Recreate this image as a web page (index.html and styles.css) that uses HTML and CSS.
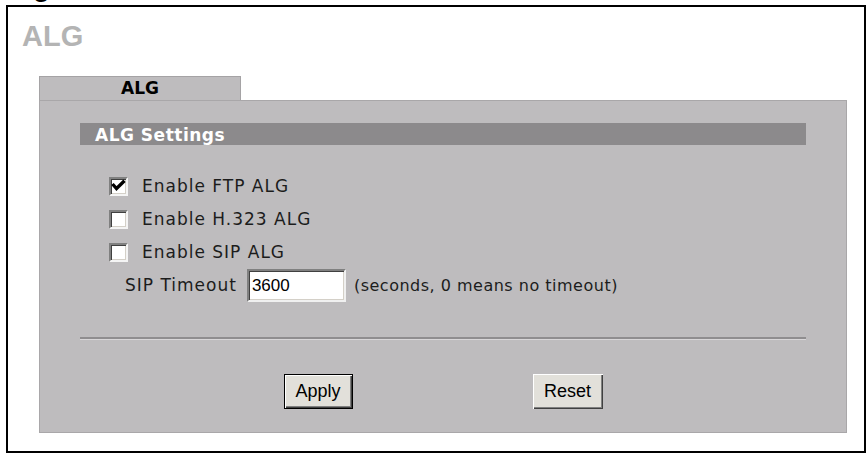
FILE: index.html
```html
<!DOCTYPE html>
<html>
<head>
<meta charset="utf-8">
<link rel="stylesheet" href="styles.css">
</head>
<body>
<div class="caption">Figure</div>
<div class="frame">
  <div class="title">ALG</div>
  <div class="tabs"><div class="tab">ALG</div></div>
  <div class="panel">
    <div class="bar">ALG Settings</div>
    <div class="rows">
      <div class="row"><span class="cb"><svg width="15" height="15" viewBox="0 0 15 15"><path d="M1.5 5 L5.5 9.5 L13.5 1.8" fill="none" stroke="#000" stroke-width="3.3"/></svg></span><span class="lbl">Enable FTP ALG</span></div>
      <div class="row"><span class="cb"></span><span class="lbl">Enable H.323 ALG</span></div>
      <div class="row"><span class="cb"></span><span class="lbl">Enable SIP ALG</span></div>
      <div class="row timeout"><span class="lbl">SIP Timeout</span><input class="tbox" type="text" value="3600"><span class="note">(seconds, 0 means no timeout)</span></div>
    </div>
    <div class="sep"></div>
    <div class="buttons">
      <button class="btn apply">Apply</button>
      <button class="btn reset">Reset</button>
    </div>
  </div>
</div>
</body>
</html>
```
FILE: styles.css
```css
html, body {
  margin: 0;
  background: #fff;
}
body {
  display: flow-root;
}
.caption {
  font: bold 28px/28px "Liberation Sans", Arial, sans-serif;
  color: #000;
  height: 32px;
  margin: -27px 0 0 8px;
}
.frame {
  box-sizing: border-box;
  margin: 0 2px 0 6px;
  height: 448px;
  border: 2px solid #000;
}
.title {
  font: bold 29px/34px "Liberation Sans", Arial, sans-serif;
  color: #b4b4b4;
  margin: 12px 0 0 14px;
}
.tabs {
  margin: 23px 0 0 31px;
}
.tab {
  box-sizing: border-box;
  width: 202px;
  height: 24px;
  border: 1px solid #a5a3a5;
  border-bottom: 0;
  background: #bebcbe;
  font: bold 17px/23px "DejaVu Sans", sans-serif;
  text-align: center;
  color: #000;
}
.panel {
  box-sizing: border-box;
  width: 808px;
  height: 333px;
  margin-left: 31px;
  border: 1px solid #a9a7a9;
  background: #bebcbe;
  padding: 22px 40px 0;
}
.bar {
  box-sizing: border-box;
  height: 22px;
  background: #8c8a8c;
  color: #fff;
  font: bold 17px/19px "DejaVu Sans", sans-serif;
  letter-spacing: 0.5px;
  padding: 3px 0 0 15px;
}
.rows {
  padding: 25px 0 0 29px;
}
.row {
  display: flex;
  align-items: center;
  height: 33px;
}
.cb {
  box-sizing: border-box;
  width: 19px;
  height: 19px;
  flex: none;
  background: #fff;
  border: 2px solid;
  border-color: #808080 #f4f4f4 #f4f4f4 #808080;
  box-shadow: inset 1px 1px #404040, inset -1px -1px #d4d0c8;
  margin-right: 14px;
}
.cb svg {
  display: block;
}
.lbl {
  font: 17px/33px "DejaVu Sans", sans-serif;
  letter-spacing: 1px;
  color: #1c1c1c;
  white-space: nowrap;
}
.timeout {
  padding-left: 16px;
}
.tbox {
  box-sizing: border-box;
  width: 99px;
  height: 33px;
  margin: 0 8px 0 10px;
  padding: 0 3px;
  font: 17px "Liberation Sans", Arial, sans-serif;
  color: #000;
  background: #fff;
  border: 2px solid;
  border-color: #808080 #f0f0f0 #f0f0f0 #808080;
  box-shadow: inset 1px 1px #404040, inset -1px -1px #d4d0c8;
  outline: none;
}
.note {
  font: 16px "DejaVu Sans", sans-serif;
  letter-spacing: 0.5px;
  color: #1c1c1c;
  white-space: nowrap;
}
.sep {
  margin-top: 35px;
  border-top: 2px solid #8f8d8f;
  border-bottom: 1px solid #d8d6d8;
}
.buttons {
  display: flex;
  justify-content: center;
  gap: 180px;
  margin-top: 34px;
}
.btn {
  box-sizing: border-box;
  height: 35px;
  padding: 0;
  font: 18px "Liberation Sans", Arial, sans-serif;
  color: #000;
  background: #e2e0da;
}
.apply {
  width: 69px;
  border: 1px solid #000;
  box-shadow: inset 1px 1px #fff, inset -1px -1px #404040, inset -2px -2px #808080;
}
.reset {
  width: 70px;
  border: 0;
  box-shadow: inset 1px 1px #fff, inset -1px -1px #404040, inset -2px -2px #808080;
}
```
